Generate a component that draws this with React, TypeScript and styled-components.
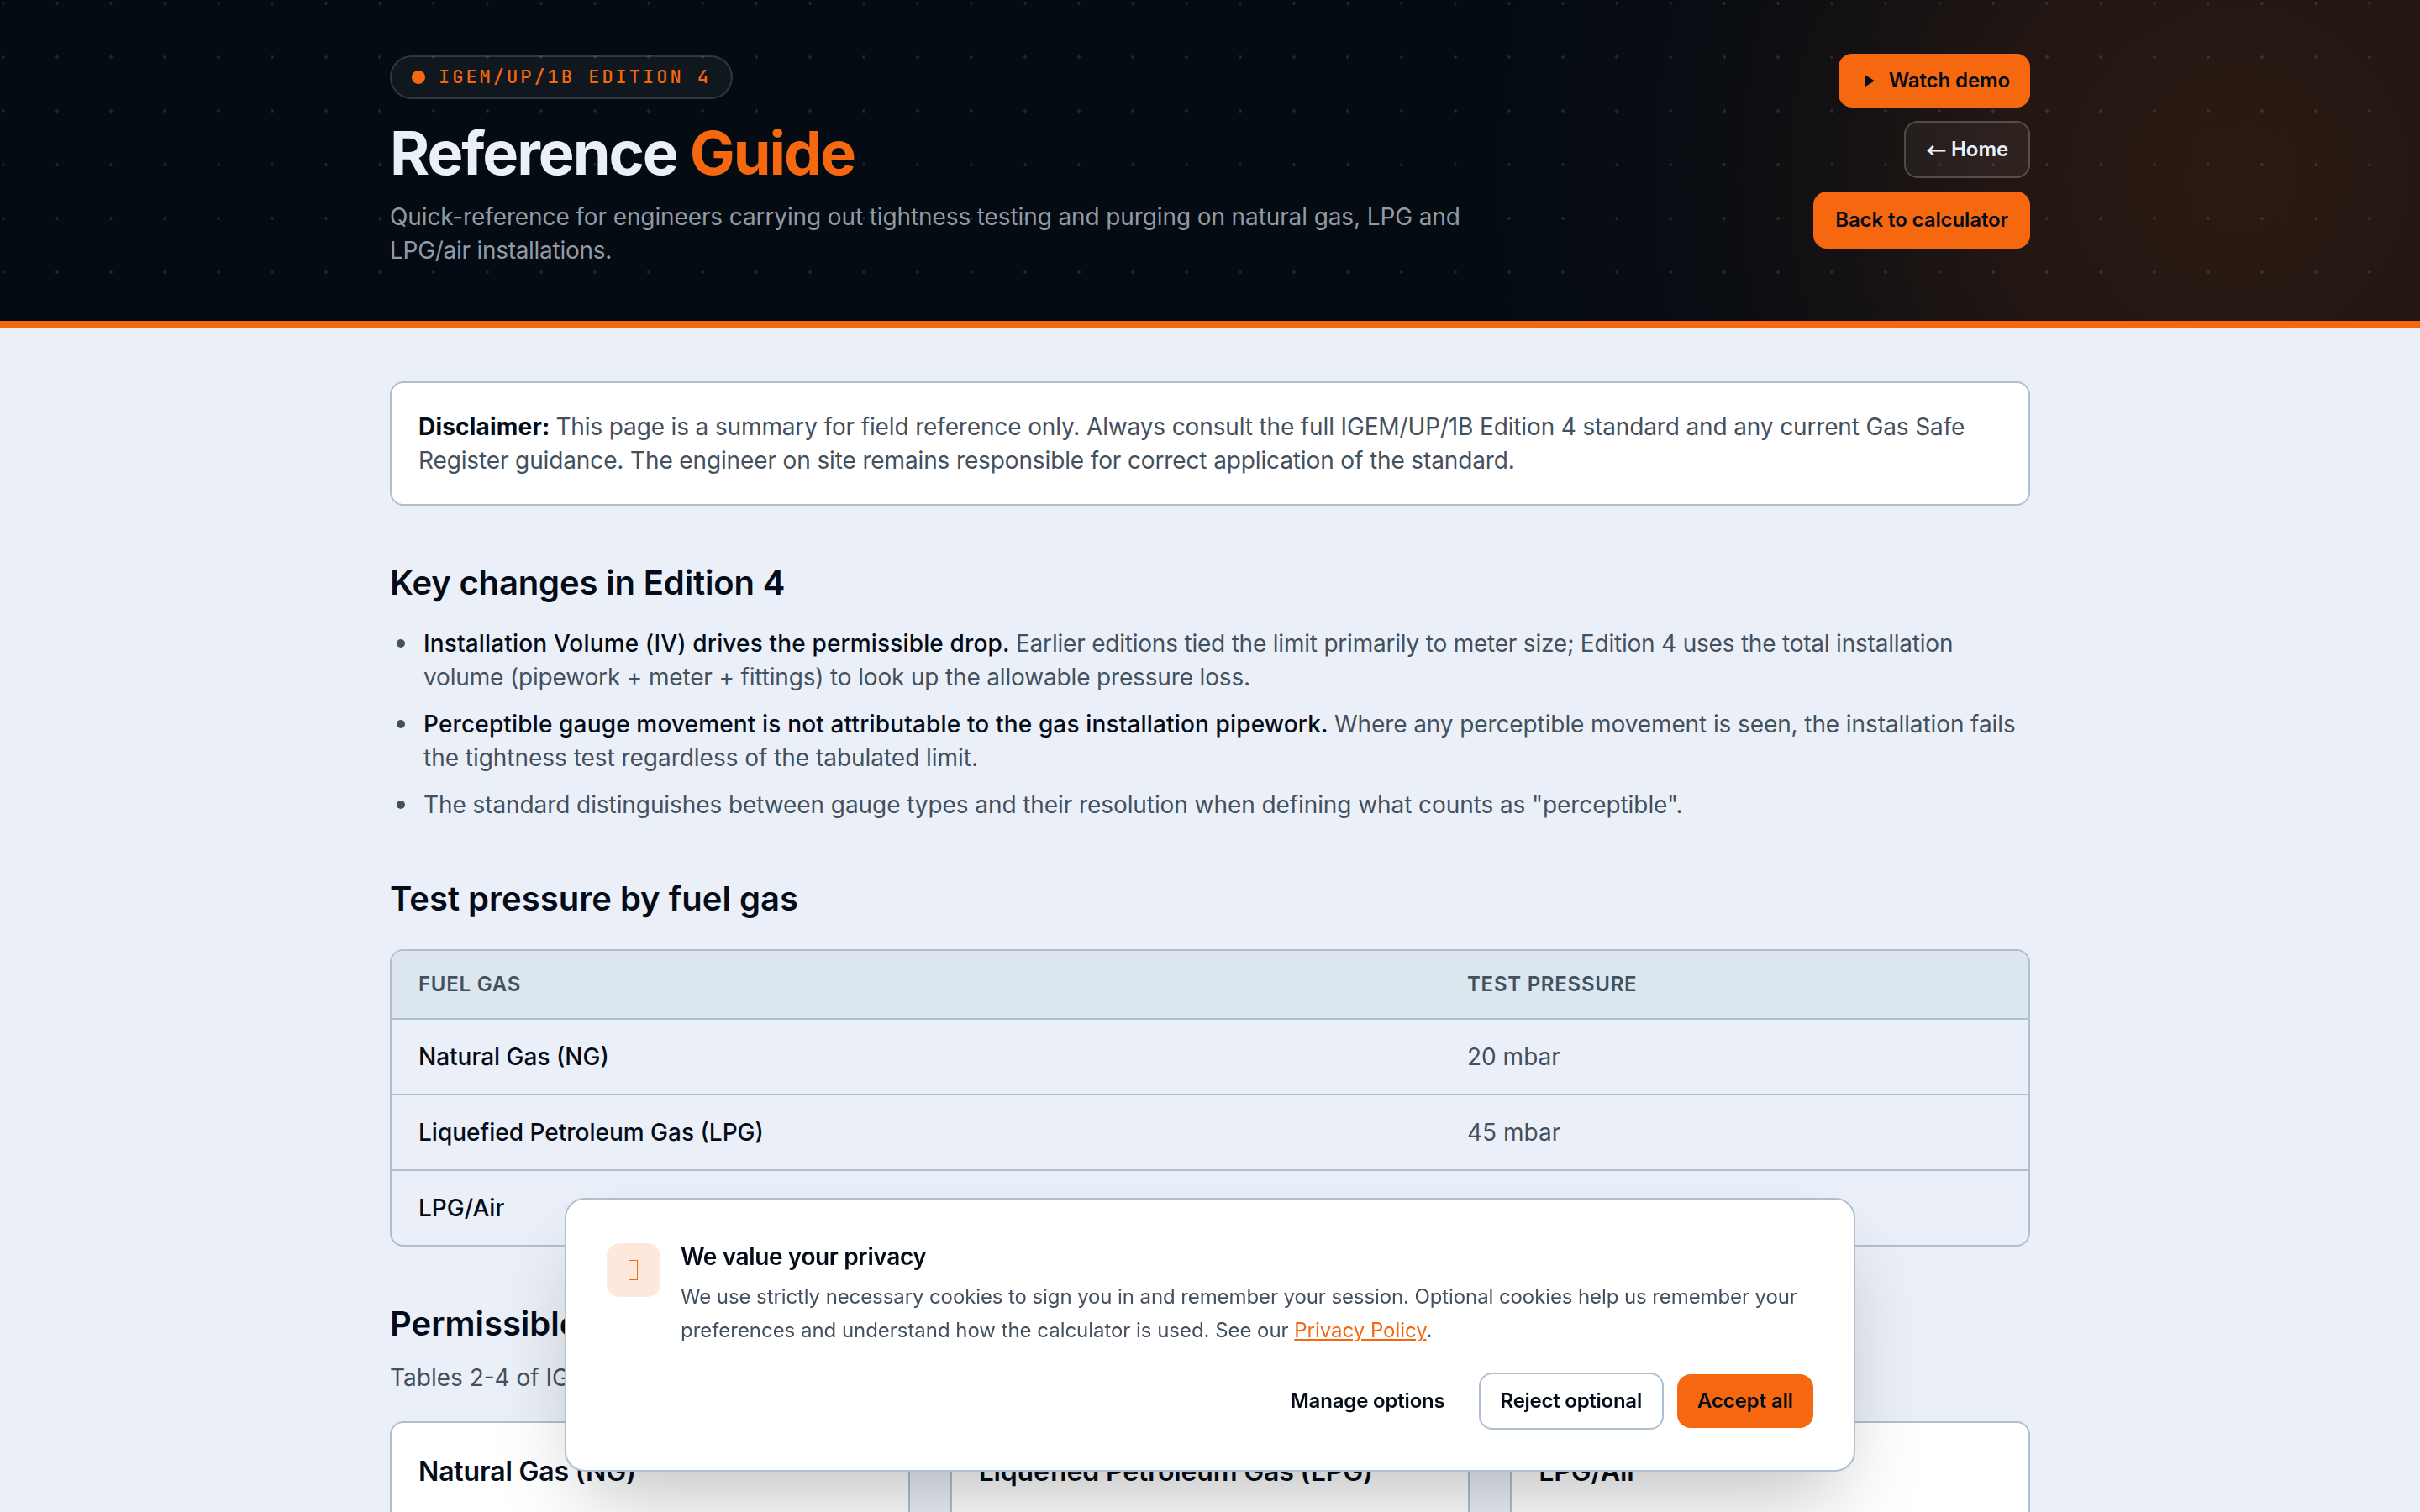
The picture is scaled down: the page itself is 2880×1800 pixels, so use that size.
import React from 'react';
import styled, { createGlobalStyle } from 'styled-components';

const GlobalStyle = createGlobalStyle`
  * {
    box-sizing: border-box;
    margin: 0;
    padding: 0;
  }

  body {
    background: #ebf0f8;
    color: #030c18;
    font-family: Inter, 'Liberation Sans', sans-serif;
    font-size: 28px;
    line-height: 40px;
  }
`;

const Page = styled.div`
  height: 1800px;
  overflow: hidden;
`;

const Header = styled.header`
  height: 390px;
  border-bottom: 8px solid #f5680f;
  background:
    radial-gradient(circle at 4px 4px, rgba(255, 255, 255, 0.1) 2px, transparent 2px) 0 0 / 64px 64px,
    radial-gradient(
      circle 900px at 2664px 210px,
      rgba(245, 104, 15, 0.16),
      rgba(245, 104, 15, 0.13) 30%,
      rgba(245, 104, 15, 0.075) 50%,
      rgba(245, 104, 15, 0.03) 68%,
      rgba(245, 104, 15, 0)
    ),
    #040b13;
`;

const HeaderInner = styled.div`
  display: flex;
  justify-content: space-between;
  width: 1952px;
  margin: 0 auto;
  padding-top: 64px;
`;

const Intro = styled.div`
  width: 1344px;
  padding-top: 2px;
`;

const Badge = styled.div`
  display: flex;
  align-items: center;
  gap: 16px;
  width: fit-content;
  height: 52px;
  padding: 0 24px;
  border: 2px solid rgba(255, 255, 255, 0.14);
  border-radius: 26px;
  background: rgba(255, 255, 255, 0.05);
  color: #f5680f;
  font-family: 'JetBrains Mono', 'Roboto Mono', 'Liberation Mono', monospace;
  font-size: 22px;
  font-weight: 500;
  letter-spacing: 3px;
`;

const Dot = styled.span`
  width: 16px;
  height: 16px;
  border-radius: 50%;
  background: #f5680f;
`;

const Title = styled.h1`
  margin-top: 24px;
  color: #ebf0f8;
  font-size: 72px;
  font-weight: 700;
  line-height: 80px;
  letter-spacing: -2.02px;

  span {
    color: #f5680f;
  }
`;

const Subtitle = styled.p`
  margin-top: 16px;
  color: #929aa4;
`;

// run of text with its own tracking
const Run = styled.span<{ $track: number }>`
  letter-spacing: ${props => props.$track}px;
`;

const Actions = styled.div`
  display: flex;
  flex-direction: column;
  align-items: flex-end;
  gap: 16px;
`;

const Button = styled.button`
  display: inline-flex;
  align-items: center;
  justify-content: center;
  height: 64px;
  padding: 0 24px;
  border: 0;
  border-radius: 16px;
  background: #f5680f;
  color: #030c18;
  font: 600 24px/32px Inter, 'Liberation Sans', sans-serif;
  letter-spacing: -0.1px;
  white-space: nowrap;
`;

const LargeButton = styled(Button)`
  height: 68px;
  padding: 0 26px;
`;

const DarkButton = styled(Button)`
  height: 68px;
  border: 2px solid rgba(255, 255, 255, 0.2);
  background: rgba(255, 255, 255, 0.05);
  color: #ebf0f8;
`;

const Arrow = styled.span`
  margin-right: 6px;
  font-family: 'Noto Sans CJK JP', sans-serif;
`;

const OutlineButton = styled(Button)`
  height: 68px;
  border: 2px solid #b0bfd0;
  background: #fff;
  letter-spacing: -0.26px;
`;

const GhostButton = styled(Button)`
  background: transparent;
  letter-spacing: -0.18px;
`;

const PlayIcon = styled.svg`
  width: 24px;
  height: 24px;
  margin-right: 12px;
`;

const Main = styled.main`
  width: 1952px;
  margin: 0 auto;
  padding-top: 64px;
`;

const Notice = styled.div`
  height: 148px;
  padding: 32px;
  border: 2px solid #b0bfd0;
  border-radius: 16px;
  background: #fff;
  color: #43505e;

  strong {
    color: #030c18;
    letter-spacing: 0.2px;
  }
`;

const Heading = styled.h2<{ $track?: number }>`
  font-size: 40px;
  font-weight: 600;
  line-height: 56px;
  letter-spacing: ${props => props.$track ?? 0}px;
`;

const Section = styled.section`
  margin-top: 64px;
`;

const List = styled.ul`
  display: flex;
  flex-direction: column;
  gap: 16px;
  margin-top: 24px;
  padding-left: 40px;
  color: #43505e;
  list-style: none;

  li::before {
    content: '';
    display: inline-block;
    width: 10px;
    height: 10px;
    margin-left: -32px;
    margin-right: 22px;
    border-radius: 50%;
    background: #43505e;
    vertical-align: 5px;
  }

  strong {
    color: #030c18;
    font-weight: 500;
    letter-spacing: 0.15px;
  }
`;

const Table = styled.div`
  margin-top: 32px;
  border: 2px solid #b0bfd0;
  border-radius: 16px;
  overflow: hidden;
`;

const Row = styled.div`
  display: grid;
  grid-template-columns: 1248px 1fr;
  align-items: center;
  height: 90px;
  padding: 0 32px;
  border-top: 2px solid #b0bfd0;
  color: #43505e;
`;

const HeadRow = styled(Row)`
  height: 80px;
  border-top: 0;
  background: #dbe6ef;
  font-size: 24px;
  font-weight: 600;
  letter-spacing: 0.75px;
  text-transform: uppercase;
`;

const Fuel = styled.span`
  color: #030c18;
  font-weight: 500;
`;

const Lead = styled.p`
  margin-top: 16px;
  color: #43505e;
`;

const Cards = styled.div`
  display: grid;
  grid-template-columns: repeat(3, 1fr);
  gap: 48px;
  margin-top: 32px;
`;

const Card = styled.div`
  height: 110px;
  padding: 34px 32px 0;
  border: 2px solid #b0bfd0;
  border-bottom: 0;
  border-radius: 16px 16px 0 0;
  background: #fff;
  font-size: 32px;
  font-weight: 600;
  line-height: 48px;
  letter-spacing: -0.16px;
`;

const Consent = styled.div`
  position: fixed;
  left: 672px;
  bottom: 48px;
  width: 1536px;
  height: 326px;
  padding: 46px 48px;
  border: 2px solid #b0bfd0;
  border-radius: 24px;
  background: #fff;
  box-shadow: 0 50px 100px -24px rgba(0, 0, 0, 0.25);
`;

const ConsentBody = styled.div`
  display: flex;
  gap: 24px;
`;

const CookieIcon = styled.div`
  display: flex;
  flex-shrink: 0;
  align-items: center;
  justify-content: center;
  width: 64px;
  height: 64px;
  margin-top: 6px;
  border-radius: 16px;
  background: #fee7db;

  &::before {
    content: '';
    width: 9px;
    height: 22px;
    margin-right: 1px;
    border: 1px solid #f5680f;
  }
`;

const ConsentTitle = styled.h3`
  font-size: 28px;
  font-weight: 600;
  line-height: 44px;
  letter-spacing: -0.37px;
`;

const ConsentText = styled.p`
  margin-top: 6px;
  color: #43505e;
  font-size: 24px;
  line-height: 40px;

  a {
    color: #f5680f;
    text-decoration: underline;
  }
`;

const ConsentActions = styled.div`
  display: flex;
  align-items: center;
  justify-content: flex-end;
  gap: 16px;
  margin-top: 30px;
`;

const pressures = [
  { fuel: 'Natural Gas (NG)', pressure: '20 mbar' },
  { fuel: 'Liquefied Petroleum Gas (LPG)', pressure: '45 mbar' },
  { fuel: 'LPG/Air', pressure: '' },
];

const App: React.FC = () => {
  return (
    <Page>
      <GlobalStyle />
      <Header>
        <HeaderInner>
          <Intro>
            <Badge><Dot />IGEM/UP/1B EDITION 4</Badge>
            <Title>Reference <span>Guide</span></Title>
            <Subtitle>
              <Run $track={-0.11}>Quick-reference for engineers carrying out tightness testing and purging on natural gas, LPG and </Run>
              <Run $track={-0.28}>LPG/air installations.</Run>
            </Subtitle>
          </Intro>
          <Actions>
            <Button>
              <PlayIcon viewBox="0 0 24 24"><path d="M8 5.6v13.4l11-6.7z" fill="currentColor" /></PlayIcon>
              Watch demo
            </Button>
            <DarkButton><Arrow>←</Arrow>Home</DarkButton>
            <LargeButton>Back to calculator</LargeButton>
          </Actions>
        </HeaderInner>
      </Header>

      <Main>
        <Notice>
          <strong>Disclaimer: </strong>
          <Run $track={-0.14}>This page is a summary for field reference only. Always consult the full IGEM/UP/1B Edition 4 standard and any current Gas Safe </Run>
          <Run $track={-0.13}>Register guidance. The engineer on site remains responsible for correct application of the standard.</Run>
        </Notice>

        <Section>
          <Heading $track={-0.15}>Key changes in Edition 4</Heading>
          <List>
            <li>
              <strong>Installation Volume (IV) drives the permissible drop. </strong>
              <Run $track={-0.21}>Earlier editions tied the limit primarily to meter size; Edition 4 uses the total installation </Run>
              <Run $track={-0.16}>volume (pipework + meter + fittings) to look up the allowable pressure loss.</Run>
            </li>
            <li>
              <strong>Perceptible gauge movement is not attributable to the gas installation pipework. </strong>
              <Run $track={-0.1}>Where any perceptible movement is seen, the installation fails </Run>
              <Run $track={-0.03}>the tightness test regardless of the tabulated limit.</Run>
            </li>
            <li>
              <Run $track={-0.08}>The standard distinguishes between gauge types and their resolution when defining what counts as "perceptible".</Run>
            </li>
          </List>
        </Section>

        <Section>
          <Heading>Test pressure by fuel gas</Heading>
          <Table>
            <HeadRow><span>Fuel gas</span><span>Test pressure</span></HeadRow>
            {pressures.map(row => (
              <Row key={row.fuel}>
                <Fuel>{row.fuel}</Fuel>
                <span>{row.pressure}</span>
              </Row>
            ))}
          </Table>
        </Section>

        <Section>
          <Heading>Permissible</Heading>
          <Lead>Tables 2-4 of IG</Lead>
          <Cards>
            {pressures.map(row => <Card key={row.fuel}>{row.fuel}</Card>)}
          </Cards>
        </Section>
      </Main>

      <Consent>
        <ConsentBody>
          <CookieIcon />
          <div>
            <ConsentTitle>We value your privacy</ConsentTitle>
            <ConsentText>
              <Run $track={-0.1}>We use strictly necessary cookies to sign you in and remember your session. Optional cookies help us remember your </Run>
              <Run $track={-0.04}>preferences and understand how the calculator is used. See our <a>Privacy Policy</a>.</Run>
            </ConsentText>
          </div>
        </ConsentBody>
        <ConsentActions>
          <GhostButton>Manage options</GhostButton>
          <OutlineButton>Reject optional</OutlineButton>
          <Button>Accept all</Button>
        </ConsentActions>
      </Consent>
    </Page>
  );
};

export default App;
